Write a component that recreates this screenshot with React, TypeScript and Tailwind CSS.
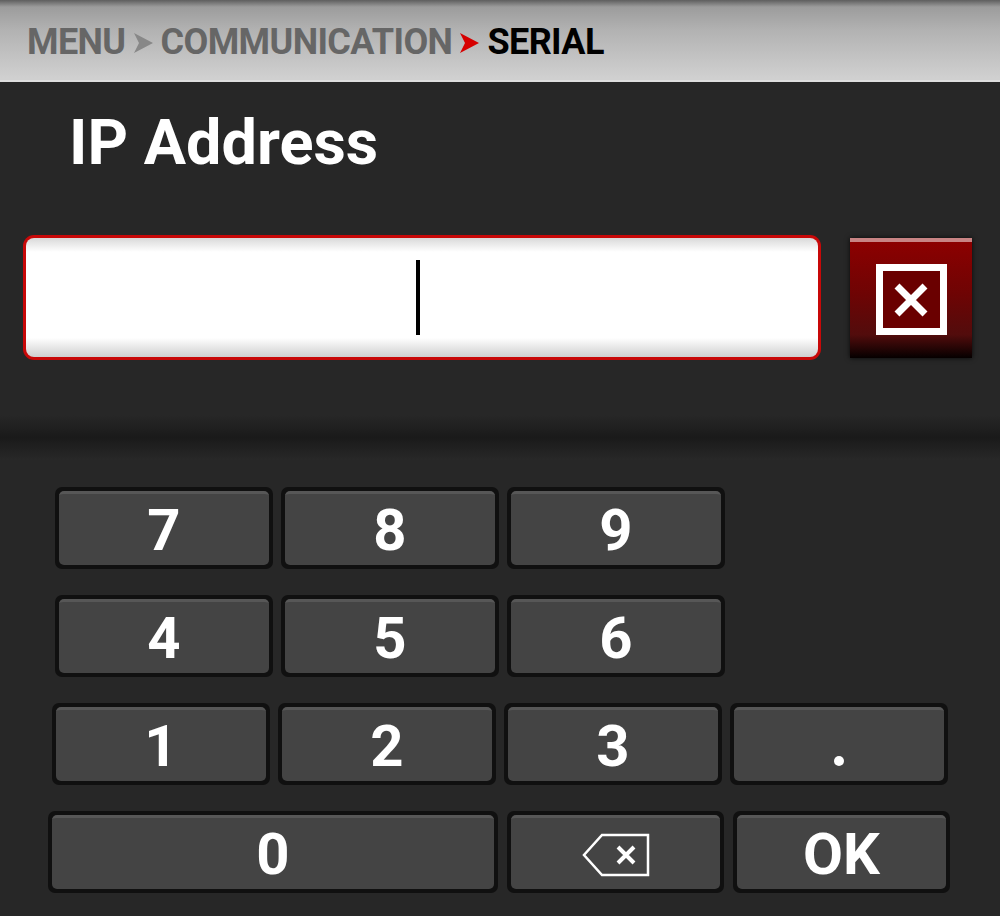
import React from "react";

function Chevron({ color }: { color: string }) {
  return (
    <svg width="21" height="24" viewBox="0 0 21 24" className="mx-[7px] mt-[2px]">
      <path d="M1 2 L20 12 L1 22 L6 12 Z" fill={color} />
    </svg>
  );
}

function Key({ children, className = "" }: { children: React.ReactNode; className?: string }) {
  return (
    <div className={"h-[82px] rounded-[7px] bg-[#101010] p-[4px] " + className}>
      <div className="flex h-full items-center justify-center rounded-[5px] border-t-[3px] border-[#575757] bg-[#444444] text-[58px] font-bold leading-none text-white">
        {children}
      </div>
    </div>
  );
}

function BackspaceIcon() {
  return (
    <svg width="68" height="44" viewBox="0 0 68 44" className="mt-[2px]">
      <path d="M66 2 L20 2 L2 22 L20 42 L66 42 Z" fill="none" stroke="white" strokeWidth="2.5" />
      <path d="M36 14 L52 30 M52 14 L36 30" stroke="white" strokeWidth="4" />
    </svg>
  );
}

export default function App() {
  return (
    <div className="flex h-[916px] w-[1000px] flex-col overflow-hidden bg-[#272727] font-['Roboto',sans-serif]">
      {/* breadcrumb bar */}
      <div className="flex h-[80px] items-center bg-[linear-gradient(to_bottom,#5e5e5e_0px,#9c9c9c_7px,#b2b2b2_30px,#d0d0d0_78px)] pl-[27px] pt-[3px] text-[36px] font-bold tracking-[-0.6px]">
        <span className="text-[#666666]">MENU</span>
        <Chevron color="#888888" />
        <span className="text-[#666666]">COMMUNICATION</span>
        <Chevron color="#d60000" />
        <span className="text-black">SERIAL</span>
      </div>
      <div className="h-[2px] bg-[#dedede]" />

      {/* title and input */}
      <h1 className="ml-[69px] mt-[29px] text-[63px] font-bold leading-none text-white">IP Address</h1>

      <div className="mt-[61px] flex items-center pl-[23px]">
        <div className="h-[125px] w-[798px] rounded-[11px] bg-[#c80808] p-[3px]">
          <div className="flex h-full items-center justify-center rounded-[8px] bg-[linear-gradient(to_bottom,#d9d9d9_0px,#ffffff_14px,#ffffff_100px,#cfcfcf_119px)] pr-[9px]">
            <div className="h-[75px] w-[4px] bg-black" />
          </div>
        </div>
        <div className="ml-[29px] flex h-[120px] w-[122px] flex-col overflow-hidden shadow-[0_0_5px_rgba(0,0,0,0.8)]">
          <div className="h-[4px] bg-[#c88484]" />
          <div className="flex flex-1 items-center justify-center bg-[linear-gradient(to_bottom,#8c0000_0%,#6e0404_45%,#520c0c_80%,#050000_100%)]">
            <div className="flex h-[71px] w-[71px] items-center justify-center border-[7px] border-white bg-[#6a0000]">
              <svg width="36" height="36" viewBox="0 0 36 36">
                <path d="M4 4 L32 32 M32 4 L4 32" stroke="white" strokeWidth="7" />
              </svg>
            </div>
          </div>
        </div>
      </div>

      {/* divider */}
      <div className="mt-[55px] h-[45px] bg-[linear-gradient(to_bottom,#272727_0%,#1a1a1a_50%,#282828_100%)]" />

      {/* keypad */}
      <div className="mt-[27px] flex flex-col gap-[26px]">
        <div className="grid grid-cols-[218px_218px_218px] gap-x-[8px] pl-[55px]">
          <Key>7</Key>
          <Key>8</Key>
          <Key>9</Key>
        </div>
        <div className="grid grid-cols-[218px_218px_218px] gap-x-[8px] pl-[55px]">
          <Key>4</Key>
          <Key>5</Key>
          <Key>6</Key>
        </div>
        <div className="grid grid-cols-[218px_218px_218px_218px] gap-x-[8px] pl-[52px]">
          <Key>1</Key>
          <Key>2</Key>
          <Key>3</Key>
          <Key>
            <span className="mt-[30px] block h-[10px] w-[10px] rounded-full bg-white" />
          </Key>
        </div>
        <div className="grid grid-cols-[450px_217px_217px] gap-x-[9px] pl-[48px]">
          <Key>0</Key>
          <Key>
            <BackspaceIcon />
          </Key>
          <Key>OK</Key>
        </div>
      </div>
    </div>
  );
}
